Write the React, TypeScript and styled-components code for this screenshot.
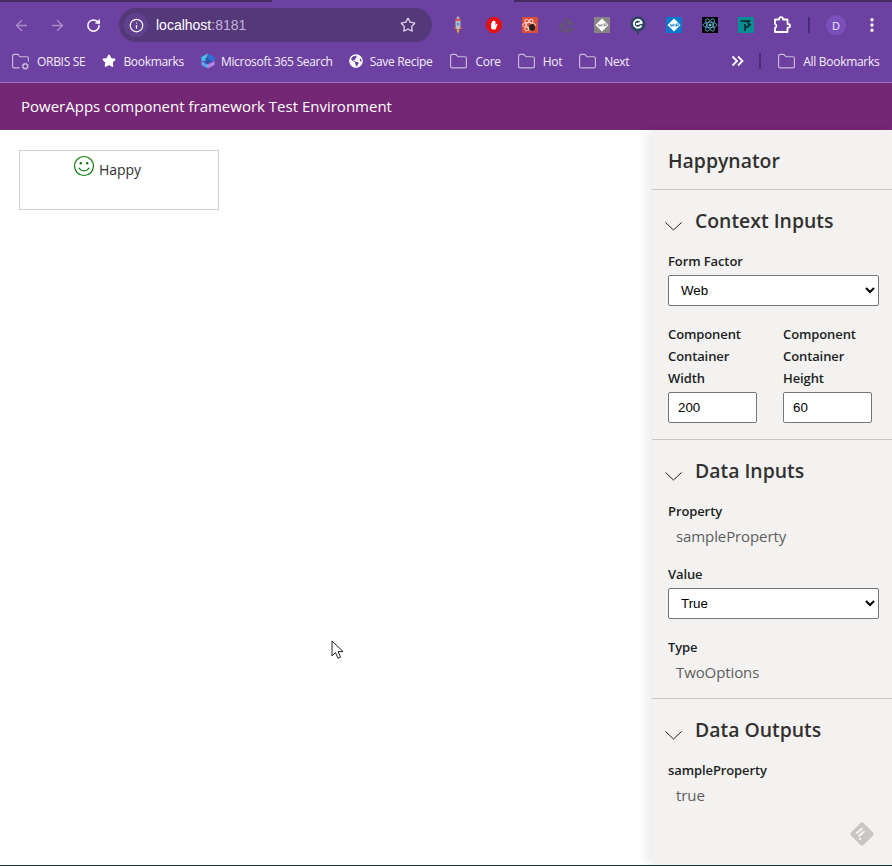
import React from "react";
import styled, { createGlobalStyle } from "styled-components";
import { ArrowLeft, ArrowRight, EllipsisVertical, Folder, FolderCog, Info, Recycle, RotateCw, Star } from "lucide-react";
import { FaGlobeAmericas } from "react-icons/fa";

const GlobalStyle = createGlobalStyle`
  html, body {
    margin: 0;
    padding: 0;
    background: #fff;
  }
  * {
    box-sizing: border-box;
  }
`;

const Page = styled.div`
  position: relative;
  display: flex;
  flex-direction: column;
  width: 892px;
  height: 866px;
  overflow: hidden;
  font-family: "Open Sans", "Noto Sans", sans-serif;
`;

const Chrome = styled.div`
  height: 83px;
  background: #6d41a1;
  border-bottom: 1px solid #9579bd;
  display: flex;
  flex-direction: column;
`;

const TabStrip = styled.div`
  height: 2px;
  display: flex;
  justify-content: space-between;
  flex: none;
`;

const TabEdge = styled.div<{ $width: number }>`
  height: 2px;
  width: ${({ $width }) => $width}px;
  background: #46295f;
`;

const ToolRow = styled.div`
  height: 34px;
  margin-top: 6px;
  display: flex;
  align-items: center;
  flex: none;
`;

const NavButton = styled.div<{ $dim?: boolean }>`
  width: 36px;
  height: 34px;
  display: flex;
  align-items: center;
  justify-content: center;
  color: ${({ $dim }) => ($dim ? "#a88dc9" : "#ffffff")};
`;

const NavGroup = styled.div`
  display: flex;
  margin-left: 3px;
`;

const Omnibox = styled.div`
  width: 313px;
  height: 34px;
  margin-left: 8px;
  border-radius: 17px;
  background: #55387a;
  display: flex;
  align-items: center;
  padding: 0 16px 0 5px;
`;

const SiteInfo = styled.div`
  width: 24px;
  height: 24px;
  border-radius: 50%;
  background: #63408f;
  color: #fff;
  display: flex;
  align-items: center;
  justify-content: center;
`;

const Url = styled.div`
  margin-left: 8px;
  flex: 1;
  font-family: "Liberation Sans", sans-serif;
  font-size: 14px;
  color: #ffffff;
  span {
    color: #c3b3d8;
  }
`;

const Extensions = styled.div`
  display: flex;
  align-items: center;
  margin-left: 8px;
`;

const ExtSlot = styled.div`
  width: 36px;
  height: 34px;
  display: flex;
  align-items: center;
  justify-content: center;
  color: #fff;
`;

const Avatar = styled.div`
  width: 20px;
  height: 20px;
  margin-right: 8px;
  border-radius: 50%;
  background: #7a50bd;
  color: #f1eafa;
  font-size: 11px;
  display: flex;
  align-items: center;
  justify-content: center;
`;

const ToolDivider = styled.div`
  width: 2px;
  height: 16px;
  background: #4c2d75;
  margin: 0 16px 0 8px;
`;

const BookmarkRow = styled.div`
  height: 38px;
  display: flex;
  align-items: center;
  padding-left: 11px;
  flex: none;
`;

const Bookmark = styled.div<{ $gap?: number; $after?: number }>`
  display: flex;
  align-items: center;
  flex: none;
  gap: ${({ $gap }) => $gap ?? 7}px;
  margin-right: ${({ $after }) => $after ?? 16}px;
  font-size: 12px;
  letter-spacing: -0.3px;
  color: #f4eefb;
  white-space: nowrap;
  svg {
    flex: none;
  }
`;

const BarSpacer = styled.div`
  width: 85px;
  flex: none;
`;

const OverflowChevrons = styled.svg`
  flex: none;
`;

const BarDivider = styled.div`
  width: 2px;
  height: 16px;
  flex: none;
  background: #4c2d75;
  margin: 0 16px 0 14px;
`;

const AppHeader = styled.header`
  height: 47px;
  background: #742774;
  color: #fff;
  font-size: 15px;
  display: flex;
  align-items: center;
  padding: 0 0 2px 21px;
  flex: none;
`;

const Body = styled.div`
  flex: 1;
  display: flex;
  min-height: 0;
  border-bottom: 1px solid #1d3b36;
`;

const Canvas = styled.main`
  flex: 1;
  padding: 20px 19px;
`;

const ControlBox = styled.div`
  width: 200px;
  height: 60px;
  border: 1px solid #d0d0d0;
  display: flex;
  align-items: flex-start;
  padding: 4px 0 0 53px;
  gap: 4px;
  color: #323130;
  font-size: 14px;
  line-height: 26px;
`;

const HappyText = styled.span`
  margin-top: 2px;
  letter-spacing: -0.05px;
`;

const SidePanel = styled.aside`
  width: 240px;
  background: #f3f2f1;
  box-shadow: -6px 0 10px rgba(0, 0, 0, 0.07);
  position: relative;
`;

const PanelTitle = styled.h1`
  margin: 0;
  height: 60px;
  padding: 18px 16px 0;
  font-size: 19.4px;
  line-height: 26px;
  font-weight: 600;
  color: #323130;
  border-bottom: 1px solid #c8c6c4;
`;

const Section = styled.section<{ $divided?: boolean }>`
  padding: 0 0 0 16px;
  border-bottom: ${({ $divided }) => ($divided ? "1px solid #c8c6c4" : "none")};
`;

const SectionHead = styled.div`
  height: 60px;
  padding-top: 2px;
  display: flex;
  align-items: center;
  margin-left: -3px;
  gap: 13px;
  color: #323130;
`;

const Chevron = styled.svg`
  margin-top: 10px;
  flex: none;
`;

const SectionTitle = styled.h2`
  margin: 0;
  font-size: 19.4px;
  line-height: 26px;
  font-weight: 600;
`;

const FieldLabel = styled.div`
  font-size: 13px;
  line-height: 22px;
  font-weight: 600;
  letter-spacing: -0.1px;
  color: #201f1e;
`;

const FieldValue = styled.div`
  font-size: 15px;
  line-height: 26px;
  padding: 1px 0 0 8px;
  letter-spacing: -0.1px;
  color: #605e5c;
`;

const Picker = styled.select`
  display: block;
  width: 211px;
  height: 31px;
  margin: 3px 0 0;
  padding: 0 8px;
  font-family: "Liberation Sans", sans-serif;
  font-size: 13.33px;
  color: #000;
  background: #fff;
  border: 1px solid #767676;
  border-radius: 2px;
`;

const SizeGrid = styled.div`
  display: grid;
  grid-template-columns: 89px 89px;
  column-gap: 26px;
  margin-top: 17px;
  padding-bottom: 16px;
`;

const NumberInput = styled.input`
  display: block;
  width: 89px;
  height: 31px;
  margin-top: 3px;
  padding: 0 9px;
  font-family: "Liberation Sans", sans-serif;
  font-size: 13.33px;
  color: #000;
  background: #fff;
  border: 1px solid #767676;
  border-radius: 2px;
`;

const Field = styled.div<{ $top?: number; $bottom?: number }>`
  margin-top: ${({ $top }) => $top ?? 0}px;
  padding-bottom: ${({ $bottom }) => $bottom ?? 0}px;
`;

const FeedbackIcon = styled.svg`
  position: absolute;
  right: 18px;
  bottom: 19px;
`;

const Pointer = styled.svg`
  position: absolute;
  left: 331px;
  top: 640px;
`;

const SectionChevron = () => (
  <Chevron width="17" height="9" viewBox="0 0 17 9" fill="none" stroke="#201f1e" strokeWidth="1">
    <polyline points="0.500,0.500 8.500,8 16.500,0.500" />
  </Chevron>
);

const RocketIcon = () => (
  <svg width="16" height="20" viewBox="0 0 16 20">
    <path d="M8 1c2 2 2.500 4 2.500 6v7h-5V7C5.500 5 6 3 8 1z" fill="#b9bfc7" />
    <path d="M6 3.500h4V6H6z" fill="#d9534a" />
    <circle cx="8" cy="9" r="1.500" fill="#5a9bd5" />
    <path d="M5.500 10L3.500 14h2zM10.500 10l2 4h-2z" fill="#c9503f" />
    <path d="M6.500 14.500h3L8 19z" fill="#f2b01e" />
  </svg>
);

const StopIcon = () => (
  <svg width="16" height="16" viewBox="0 0 16 16">
    <path d="M5 0h6l5 5v6l-5 5H5l-5-5V5z" fill="#e60f12" />
    <path d="M5 11V6.500c0-.8 1-.8 1 0V4.500c0-.8 1.100-.8 1.100 0V4c0-.8 1.200-.8 1.200 0v.5c0-.8 1.200-.8 1.200 0V8l1-1c.7-.6 1.400 0 .9.700L9.500 12.500H6.500z" fill="#fff" />
  </svg>
);

const BugAtomIcon = () => (
  <svg width="16" height="16" viewBox="0 0 16 16">
    <rect width="16" height="16" fill="#d94f3a" />
    <g fill="none" stroke="#f9d9d2" strokeWidth="0.9">
      <ellipse cx="7" cy="8" rx="6.500" ry="2.500" />
      <ellipse cx="7" cy="8" rx="6.500" ry="2.500" transform="rotate(60 7 8)" />
      <ellipse cx="7" cy="8" rx="6.500" ry="2.500" transform="rotate(120 7 8)" />
    </g>
    <ellipse cx="10" cy="10.500" rx="3" ry="3.500" fill="#2a2020" />
  </svg>
);

const WipIcon = ({ bg, fg }: { bg: string; fg: string }) => (
  <svg width="16" height="16" viewBox="0 0 16 16">
    <rect width="16" height="16" fill={bg} />
    <path d="M8 1.500L14.500 8 8 14.500 1.500 8z" fill={fg} />
    <path d="M4 6.800l1 2.600 1-2 1 2 1-2.600M9 6.800v2.600M10.500 9.400V6.800h1.500a.8.800 0 0 1 0 1.700h-1.500" fill="none" stroke={bg} strokeWidth="0.8" />
  </svg>
);

const EslintIcon = () => (
  <svg width="16" height="18" viewBox="0 0 16 18">
    <circle cx="8" cy="8" r="7.500" fill="#2b4560" />
    <path d="M7 15h2v3H7z" fill="#2b4560" />
    <path d="M11.500 9.500A4 4 0 1 1 11.800 6.800L6.300 8.500M6 8.200l5.500-1.700" fill="none" stroke="#fff" strokeWidth="1.800" />
  </svg>
);

const ReactIcon = () => (
  <svg width="16" height="16" viewBox="0 0 16 16">
    <rect width="16" height="16" fill="#000" />
    <g fill="none" stroke="#62b8d6" strokeWidth="0.8">
      <ellipse cx="8" cy="8" rx="7" ry="2.800" />
      <ellipse cx="8" cy="8" rx="7" ry="2.800" transform="rotate(60 8 8)" />
      <ellipse cx="8" cy="8" rx="7" ry="2.800" transform="rotate(120 8 8)" />
    </g>
    <circle cx="8" cy="8" r="1.500" fill="#62b8d6" />
  </svg>
);

const TealIcon = () => (
  <svg width="16" height="16" viewBox="0 0 16 16">
    <rect width="16" height="16" fill="#068e95" />
    <path d="M2.500 4h10M6 4c3 0 5 1 5 3.500S8.500 11 6.500 10M7 7v7M10 8.500l3-1" fill="none" stroke="#14262a" strokeWidth="1.600" />
  </svg>
);

const ExtensionsPuzzle = () => (
  <svg width="18" height="18" viewBox="0 0 18 18" fill="none" stroke="#fff" strokeWidth="1.800" strokeLinejoin="round">
    <path d="M2 3.500h4.200V3a1.900 1.900 0 0 1 3.800 0v.5h4.500V8h.7a1.800 1.800 0 0 1 0 3.600h-.7V16H2v-4.200a2 2 0 0 0 0-3.800z" />
  </svg>
);

const MicrosoftSearchIcon = () => (
  <svg width="16" height="16" viewBox="0 0 16 16">
    <path d="M8 0.500L14.500 4v4H8z" fill="#2f6fd0" />
    <path d="M8 0.500L1.500 4v4h4z" fill="#45c3e6" />
    <path d="M1.500 8v4L8 15.500V11.500z" fill="#5fa8ec" />
    <path d="M8 11.500v4L14.500 12V8z" fill="#b184e6" />
    <path d="M5.500 4.500L12 8 5.500 11.500z" fill="#2458b8" />
  </svg>
);

const FeedbackMark = () => (
  <FeedbackIcon width="24" height="24" viewBox="0 0 24 24">
    <path d="M10.300 1.200a2.400 2.400 0 0 1 3.400 0l9.100 9.100a2.400 2.400 0 0 1 0 3.400l-9.100 9.100a2.400 2.400 0 0 1-3.400 0l-9.100-9.100a2.400 2.400 0 0 1 0-3.400z" fill="#c8c6c4" />
    <path d="M6.800 11l5.400-4.500M9.200 13.600l4.800-3.800" fill="none" stroke="#f3f2f1" strokeWidth="2" strokeLinecap="round" />
    <circle cx="10" cy="16.800" r="1.300" fill="#f3f2f1" />
  </FeedbackIcon>
);

const folderIcon = <Folder size={19} strokeWidth={1.5} color="#c6bad6" />;

const extensionIcons = [
  <RocketIcon key="rocket" />,
  <StopIcon key="stop" />,
  <BugAtomIcon key="bug" />,
  <Recycle key="recycle" size={17} strokeWidth={2.2} color="#5d5d62" />,
  <WipIcon key="wip-gray" bg="#858585" fg="#ffffff" />,
  <EslintIcon key="eslint" />,
  <WipIcon key="wip-blue" bg="#0a78cf" fg="#ffffff" />,
  <ReactIcon key="react" />,
  <TealIcon key="teal" />,
  <ExtensionsPuzzle key="puzzle" />,
];

export default function App() {
  return (
    <Page>
      <GlobalStyle />
      <Chrome>
        <TabStrip>
          <TabEdge $width={272} />
          <TabEdge $width={378} />
        </TabStrip>
        <ToolRow>
          <NavGroup>
            <NavButton $dim>
              <ArrowLeft size={17} strokeWidth={2} />
            </NavButton>
            <NavButton $dim>
              <ArrowRight size={17} strokeWidth={2} />
            </NavButton>
            <NavButton>
              <RotateCw size={15} strokeWidth={2.4} />
            </NavButton>
          </NavGroup>
          <Omnibox>
            <SiteInfo>
              <Info size={15} strokeWidth={2} />
            </SiteInfo>
            <Url>
              localhost<span>:8181</span>
            </Url>
            <Star size={16} strokeWidth={2} color="#d9cfe6" />
          </Omnibox>
          <Extensions>
            {extensionIcons.map((icon, index) => (
              <ExtSlot key={index}>{icon}</ExtSlot>
            ))}
            <ToolDivider />
            <Avatar>D</Avatar>
            <ExtSlot>
              <EllipsisVertical size={18} strokeWidth={2.6} />
            </ExtSlot>
          </Extensions>
        </ToolRow>
        <BookmarkRow>
          <Bookmark $after={17}>
            <FolderCog size={19} strokeWidth={1.5} color="#c6bad6" />
            ORBIS SE
          </Bookmark>
          <Bookmark>
            <Star size={14} fill="#fff" color="#fff" />
            Bookmarks
          </Bookmark>
          <Bookmark $gap={5}>
            <MicrosoftSearchIcon />
            Microsoft 365 Search
          </Bookmark>
          <Bookmark $after={17}>
            <FaGlobeAmericas size={14} color="#fff" />
            Save Recipe
          </Bookmark>
          <Bookmark>{folderIcon}Core</Bookmark>
          <Bookmark>{folderIcon}Hot</Bookmark>
          <Bookmark>{folderIcon}Next</Bookmark>
          <BarSpacer />
          <OverflowChevrons width="15" height="12" viewBox="0 0 15 12" fill="none" stroke="#fff" strokeWidth="1.800">
            <path d="M2.500 1.500L7 6l-4.500 4.500M8 1.500L12.500 6 8 10.500" />
          </OverflowChevrons>
          <BarDivider />
          <Bookmark>{folderIcon}All Bookmarks</Bookmark>
        </BookmarkRow>
      </Chrome>
      <AppHeader>PowerApps component framework Test Environment</AppHeader>
      <Body>
        <Canvas>
          <ControlBox>
            <svg width="22" height="22" viewBox="0 0 22 22" fill="none" stroke="#107c10" strokeWidth="1.200">
              <circle cx="11" cy="11" r="9.500" />
              <path d="M5.800 12.800c2.400 4 8 4 10.400 0" />
              <circle cx="7.800" cy="8.300" r="0.700" fill="#107c10" />
              <circle cx="14.200" cy="8.300" r="0.700" fill="#107c10" />
            </svg>
            <HappyText>Happy</HappyText>
          </ControlBox>
        </Canvas>
        <SidePanel>
          <PanelTitle>Happynator</PanelTitle>
          <Section $divided>
            <SectionHead>
              <SectionChevron />
              <SectionTitle>Context Inputs</SectionTitle>
            </SectionHead>
            <FieldLabel>Form Factor</FieldLabel>
            <Picker defaultValue="Web">
              <option>Web</option>
              <option>Tablet</option>
              <option>Phone</option>
            </Picker>
            <SizeGrid>
              <div>
                <FieldLabel>Component Container Width</FieldLabel>
                <NumberInput defaultValue="200" />
              </div>
              <div>
                <FieldLabel>Component Container Height</FieldLabel>
                <NumberInput defaultValue="60" />
              </div>
            </SizeGrid>
          </Section>
          <Section $divided>
            <SectionHead>
              <SectionChevron />
              <SectionTitle>Data Inputs</SectionTitle>
            </SectionHead>
            <FieldLabel>Property</FieldLabel>
            <FieldValue>sampleProperty</FieldValue>
            <Field $top={14}>
              <FieldLabel>Value</FieldLabel>
              <Picker defaultValue="True">
                <option>True</option>
                <option>False</option>
              </Picker>
            </Field>
            <Field $top={17} $bottom={13}>
              <FieldLabel>Type</FieldLabel>
              <FieldValue>TwoOptions</FieldValue>
            </Field>
          </Section>
          <Section>
            <SectionHead>
              <SectionChevron />
              <SectionTitle>Data Outputs</SectionTitle>
            </SectionHead>
            <FieldLabel>sampleProperty</FieldLabel>
            <FieldValue>true</FieldValue>
          </Section>
          <FeedbackMark />
        </SidePanel>
      </Body>
      <Pointer width="14" height="20" viewBox="0 0 14 20">
        <path d="M1 1v15l3.500-3.400 2.500 5.600 2.600-1.100-2.500-5.500h5z" fill="#fff" stroke="#222" strokeWidth="1" />
      </Pointer>
    </Page>
  );
}
